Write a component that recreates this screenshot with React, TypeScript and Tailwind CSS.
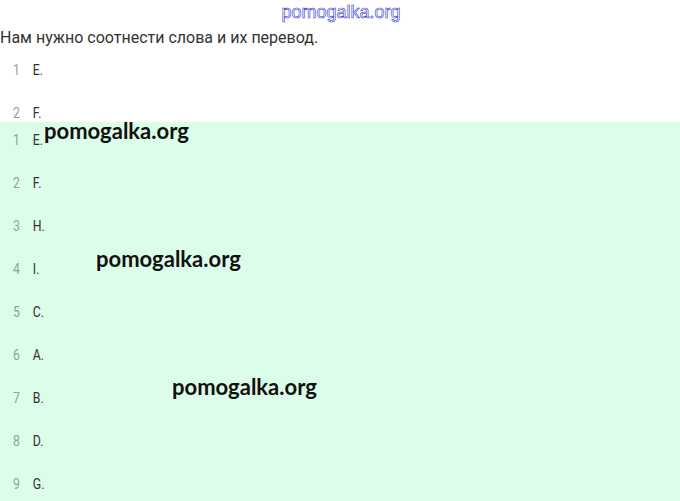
const first = ["E.", "F."];
const second = ["E.", "F.", "H.", "I.", "C.", "A.", "B.", "D.", "G."];

function Row({ n, letter }: { n: number; letter: string }) {
  return (
    <div className="flex items-start h-[43px] pt-[11px] leading-[14px] text-[15px] [font-family:'Roboto',sans-serif] [transform:scaleX(0.82)] origin-left">
      <span className="w-[40px] pl-[16px] text-[#94a09a]">{n}</span>
      <span className="text-[#333]">{letter}</span>
    </div>
  );
}

function Mark({ className }: { className: string }) {
  return (
    <div
      className={
        "absolute text-[22px] font-bold leading-[24px] text-[#111] [font-family:'Lato',sans-serif] " +
        className
      }
    >
      pomogalka.org
    </div>
  );
}

export default function App() {
  return (
    <div className="relative w-[680px] h-[501px] overflow-hidden bg-white">
      <div className="h-[24px] flex justify-center pl-[2px]">
        <span className="text-[18px] leading-[24px] text-white [font-family:'Liberation_Sans',sans-serif] [-webkit-text-stroke:0.6px_#3535d5]">
          pomogalka.org
        </span>
      </div>
      <p className="text-[16px] leading-[28px] text-[#333] [font-family:'Roboto',sans-serif]">
        Нам нужно соотнести слова и их перевод.
      </p>
      <div className="h-[70px] overflow-hidden">
        {first.map((l, i) => (
          <Row key={i} n={i + 1} letter={l} />
        ))}
      </div>
      <div className="bg-[#dbfde9] h-[379px]">
        {second.map((l, i) => (
          <Row key={i} n={i + 1} letter={l} />
        ))}
      </div>
      <Mark className="left-[44px] top-[119px]" />
      <Mark className="left-[96px] top-[247px]" />
      <Mark className="left-[172px] top-[375px]" />
    </div>
  );
}
